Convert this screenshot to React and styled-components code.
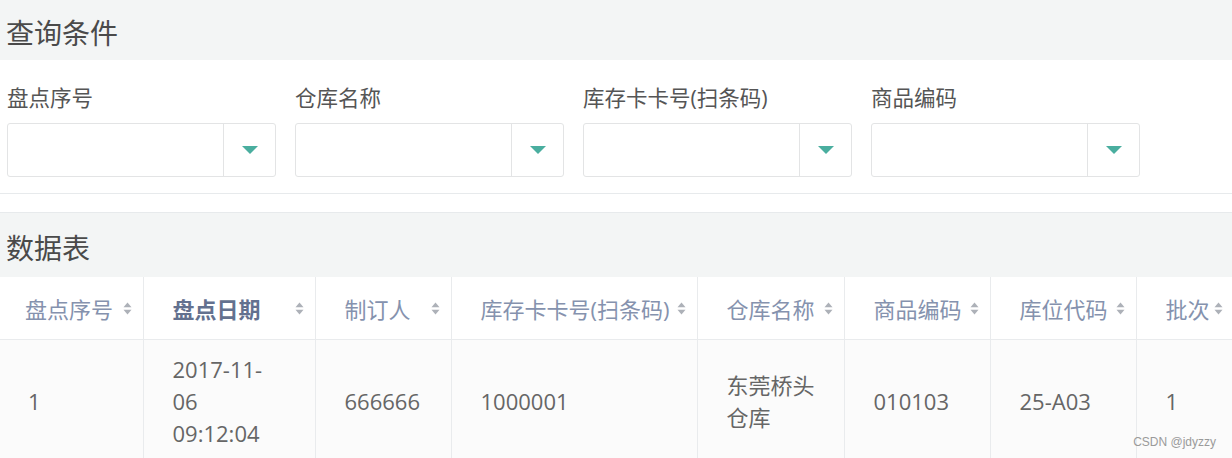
import React from "react";
import styled, { createGlobalStyle } from "styled-components";

const filters = ["盘点序号", "仓库名称", "库存卡卡号(扫条码)", "商品编码"];

const columns = [
  { key: "id", title: "盘点序号", width: 143 },
  { key: "date", title: "盘点日期", width: 172, active: true },
  { key: "maker", title: "制订人", width: 136 },
  { key: "card", title: "库存卡卡号(扫条码)", width: 246 },
  { key: "store", title: "仓库名称", width: 147 },
  { key: "goods", title: "商品编码", width: 146 },
  { key: "place", title: "库位代码", width: 146 },
  { key: "batch", title: "批次", width: 98 },
];

const rows = [
  {
    id: "1",
    date: "2017-11-06 09:12:04",
    maker: "666666",
    card: "1000001",
    store: "东莞桥头仓库",
    goods: "010103",
    place: "25-A03",
    batch: "1",
  },
];

export default function App() {
  return (
    <>
      <GlobalStyle />
      <Page>
        <Panel>
          <PanelTitle $height={60}>查询条件</PanelTitle>
          <FilterBody>
            {filters.map((label) => (
              <Field key={label}>
                <Label>{label}</Label>
                <Select>
                  <SelectValue />
                  <SelectToggle>
                    <Caret />
                  </SelectToggle>
                </Select>
              </Field>
            ))}
          </FilterBody>
        </Panel>
        <Panel $separated>
          <PanelTitle $height={64}>数据表</PanelTitle>
          <Table>
            <colgroup>
              {columns.map((c) => (
                <col key={c.key} style={{ width: c.width }} />
              ))}
            </colgroup>
            <thead>
              <tr>
                {columns.map((c) => (
                  <HeadCell key={c.key} $active={c.active}>
                    {c.title}
                    <SortIcon viewBox="0 0 9 13">
                      <path d="M4.5 0.5 L8.5 5.3 L0.5 5.3 Z" />
                      <path d="M4.5 12.5 L8.5 7.7 L0.5 7.7 Z" />
                    </SortIcon>
                  </HeadCell>
                ))}
              </tr>
            </thead>
            <tbody>
              {rows.map((r) => (
                <tr key={r.id}>
                  {columns.map((c) => (
                    <Cell key={c.key}>{r[c.key]}</Cell>
                  ))}
                </tr>
              ))}
            </tbody>
          </Table>
        </Panel>
        <Watermark>CSDN @jdyzzy</Watermark>
      </Page>
    </>
  );
}

const GlobalStyle = createGlobalStyle`
  html, body {
    margin: 0;
    padding: 0;
    background: #ffffff;
    overflow: hidden;
  }
  body {
    font-family: "Open Sans", "Noto Sans CJK SC", sans-serif;
    color: #676a6c;
  }
`;

const Page = styled.div`
  position: relative;
  width: 1232px;
  height: 458px;
  overflow: hidden;
  background: #fff;
`;

const Panel = styled.section`
  display: flex;
  flex-direction: column;
  border-top: ${(p) => (p.$separated ? "1px solid #e7eaec" : "none")};
  margin-top: ${(p) => (p.$separated ? "18px" : "0")};
`;

const PanelTitle = styled.h5`
  margin: 0;
  height: ${(p) => p.$height}px;
  padding: 3px 0 0 6px;
  box-sizing: border-box;
  display: flex;
  align-items: center;
  background: #f3f5f5;
  color: #4a4a4a;
  font-size: 28px;
  font-weight: 400;
`;

const FilterBody = styled.div`
  display: flex;
  gap: 19px;
  padding: 23px 7px 16px;
  border-bottom: 1px solid #e7eaec;
`;

const Field = styled.div`
  display: flex;
  flex-direction: column;
  gap: 10px;
  width: 269px;
`;

const Label = styled.label`
  font-size: 21.5px;
  line-height: 30px;
  color: #555;
`;

const Select = styled.div`
  display: flex;
  height: 54px;
  box-sizing: border-box;
  border: 1px solid #e3e4e5;
  border-radius: 3px;
  background: #fff;
`;

const SelectValue = styled.div`
  flex: 1;
`;

const SelectToggle = styled.div`
  width: 51px;
  display: flex;
  align-items: center;
  justify-content: center;
  border-left: 1px solid #e3e4e5;
`;

const Caret = styled.span`
  width: 0;
  height: 0;
  border-left: 8px solid transparent;
  border-right: 8px solid transparent;
  border-top: 8px solid #4aae9f;
`;

const Table = styled.table`
  table-layout: fixed;
  border-collapse: collapse;
  width: 1234px;
`;

const HeadCell = styled.th`
  position: relative;
  height: 62px;
  padding: 0 28px 0 29px;
  text-align: left;
  white-space: nowrap;
  font-size: 22px;
  font-weight: ${(p) => (p.$active ? 700 : 400)};
  color: ${(p) => (p.$active ? "#63718f" : "#8592ae")};
  background: #fff;
  border-right: 1px solid #e9ebed;
  border-bottom: 1px solid #e9ebed;
  &:first-child {
    padding-left: 25px;
  }
`;

const SortIcon = styled.svg`
  position: absolute;
  right: 11px;
  top: 50%;
  width: 9px;
  height: 13px;
  margin-top: -6px;
  fill: #adb1b8;
`;

const Cell = styled.td`
  padding: 13px 29px 13px 29px;
  font-size: 22px;
  line-height: 32px;
  color: #666;
  background: #fbfbfb;
  border-right: 1px solid #e9ebed;
  vertical-align: middle;
  &:first-child {
    padding-left: 28px;
  }
`;

const Watermark = styled.div`
  position: absolute;
  right: 16px;
  bottom: 9px;
  font-family: "Liberation Sans", sans-serif;
  font-size: 12px;
  color: #9a9a9a;
`;
